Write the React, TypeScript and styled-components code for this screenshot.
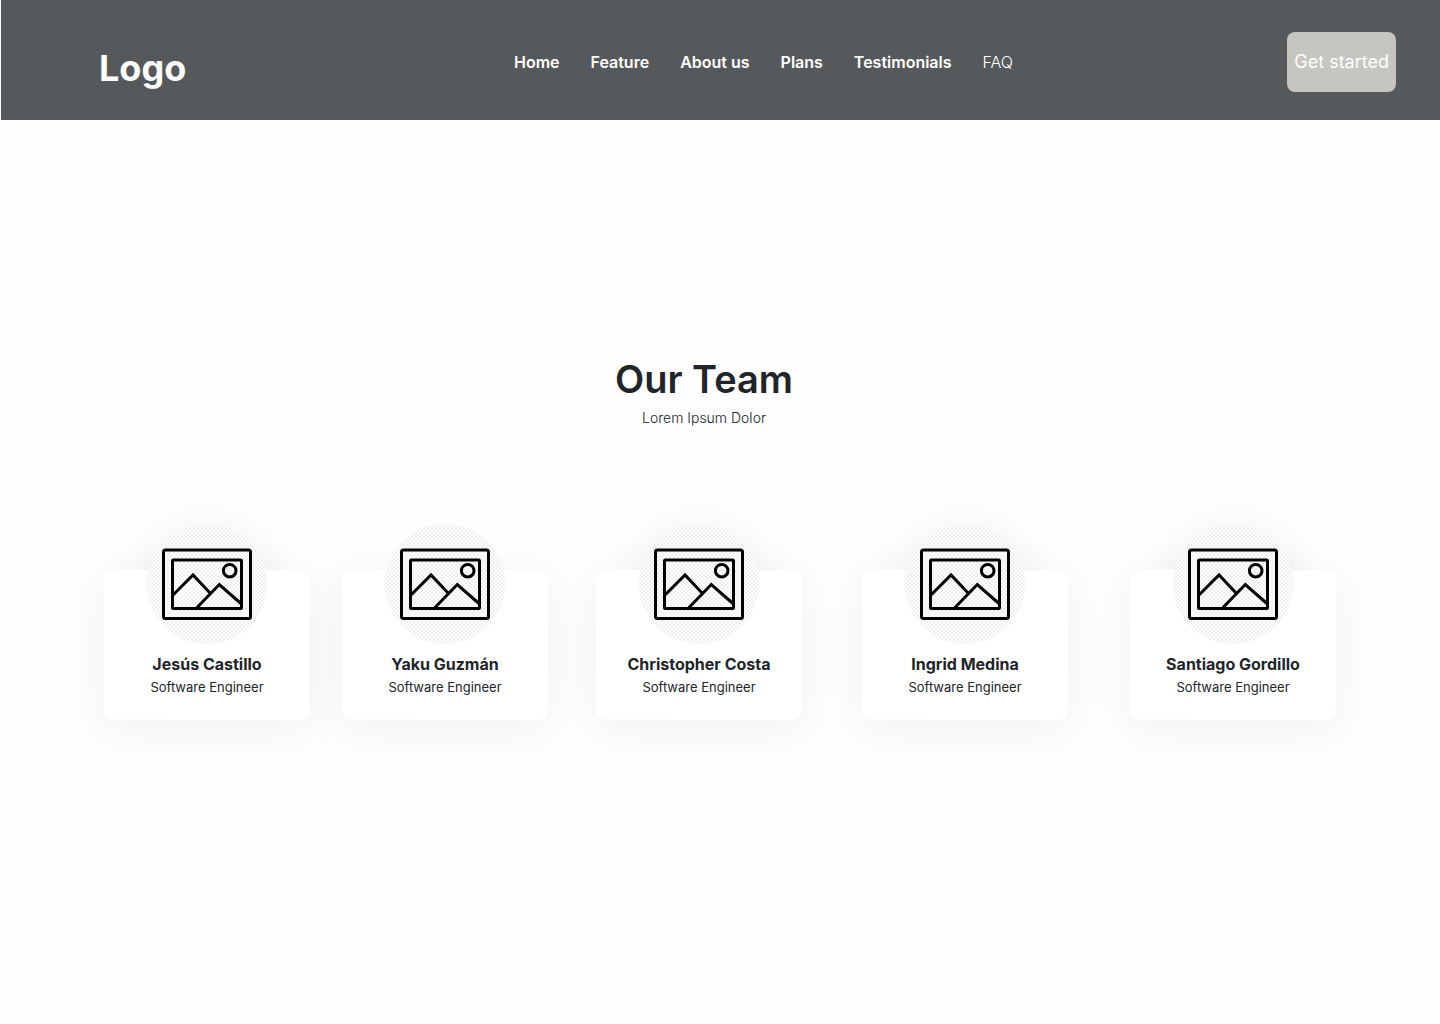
import React from "react";
import styled, { createGlobalStyle } from "styled-components";

const GlobalStyle = createGlobalStyle`
  *, *::before { box-sizing: border-box; }
  body {
    margin: 0;
    background: #fefefe;
    color: #212529;
    font-family: Inter, "Liberation Sans", sans-serif;
  }
`;

const Header = styled.header`
  display: grid;
  grid-template-columns: 13fr auto 12fr;
  align-items: center;
  min-height: 120px;
  margin-left: 1px;
  padding: 4px 44px 0 98px;
  background: #56595b;
  color: #fff;
`;

const Logo = styled.a`
  justify-self: start;
  padding-top: 12px;
  color: inherit;
  font-size: 36px;
  line-height: 44px;
  font-weight: 700;
  text-decoration: none;
`;

const Nav = styled.nav`
  display: flex;
  gap: 31px;
`;

const NavLink = styled.a<{ $light?: boolean }>`
  color: inherit;
  font-size: 16px;
  line-height: 24px;
  font-weight: ${(p) => (p.$light ? 300 : 600)};
  text-decoration: none;
  white-space: nowrap;
`;

const StartButton = styled.button`
  justify-self: end;
  height: 60px;
  padding: 0 7px;
  border: 0;
  border-radius: 8px;
  background: #c6c5bf;
  color: #fff;
  font: 400 18px/24px Inter, "Liberation Sans", sans-serif;
  white-space: nowrap;
  cursor: pointer;
`;

const Team = styled.main`
  padding: 232px 104px 60px;
`;

const Intro = styled.div`
  padding-right: 32px;
  text-align: center;
`;

const Title = styled.h1`
  margin: 0;
  font-size: 38px;
  line-height: 54px;
  font-weight: 600;
`;

const Subtitle = styled.p`
  margin: 0;
  font-size: 14px;
  line-height: 24px;
  font-weight: 300;
`;

const Members = styled.ul`
  display: grid;
  grid-template-columns: 238fr 254fr 266fr 268fr 206px;
  margin: 94px 0 0;
  padding: 0;
  list-style: none;
`;

const Card = styled.li`
  position: relative;
  display: flex;
  flex-direction: column;
  align-items: center;
  width: 206px;
  padding-bottom: 22px;

  &::before {
    content: "";
    position: absolute;
    inset: 46px 0 0;
    border-radius: 10px;
    background: #fff;
    box-shadow: 0 8px 48px rgba(0, 0, 0, 0.06);
    transform: rotate(0.25deg);
  }
`;

const Avatar = styled.div<{ $flat?: boolean }>`
  position: relative;
  width: 120px;
  height: 120px;
  border-radius: 50%;
  background: repeating-conic-gradient(#f0f0f0 0 25%, #fefefe 0 50%) 0 0 / 4px 4px;

  &::before {
    content: "";
    position: absolute;
    inset: 0;
    z-index: -1;
    border-radius: 50%;
    box-shadow: ${(p) => (p.$flat ? "none" : "0 8px 48px rgba(0, 0, 0, 0.07)")};
  }
`;

const Name = styled.h2`
  position: relative;
  margin: 8px 0 0;
  font-size: 16px;
  line-height: 24px;
  font-weight: 700;
`;

const Role = styled.p`
  position: relative;
  margin: 0;
  font-size: 13px;
  line-height: 22px;
`;

const PictureIcon = () => (
  <svg width="120" height="120" viewBox="0 0 120 120" fill="none" stroke="#000" strokeWidth="3" aria-hidden="true">
    <rect x="16.5" y="26" width="87" height="68.5" rx="2" />
    <rect x="25.5" y="36" width="69" height="48.5" rx="1" />
    <circle cx="82.7" cy="46.7" r="6.3" />
    <path d="M25.5 71.5 46 51 63.5 69.5M50 83.5 72.3 60.5 94.5 80" />
  </svg>
);

const links = ["Home", "Feature", "About us", "Plans", "Testimonials", "FAQ"];

const members = [
  { name: "Jesús Castillo" },
  { name: "Yaku Guzmán", flat: true },
  { name: "Christopher Costa" },
  { name: "Ingrid Medina" },
  { name: "Santiago Gordillo" },
];

export default function App() {
  return (
    <>
      <GlobalStyle />
      <Header>
        <Logo href="#">Logo</Logo>
        <Nav>
          {links.map((link) => (
            <NavLink key={link} href="#" $light={link === "FAQ"}>
              {link}
            </NavLink>
          ))}
        </Nav>
        <StartButton type="button">Get started</StartButton>
      </Header>
      <Team>
        <Intro>
          <Title>Our Team</Title>
          <Subtitle>Lorem Ipsum Dolor</Subtitle>
        </Intro>
        <Members>
          {members.map(({ name, flat }) => (
            <Card key={name}>
              <Avatar $flat={flat}>
                <PictureIcon />
              </Avatar>
              <Name>{name}</Name>
              <Role>Software Engineer</Role>
            </Card>
          ))}
        </Members>
      </Team>
    </>
  );
}
